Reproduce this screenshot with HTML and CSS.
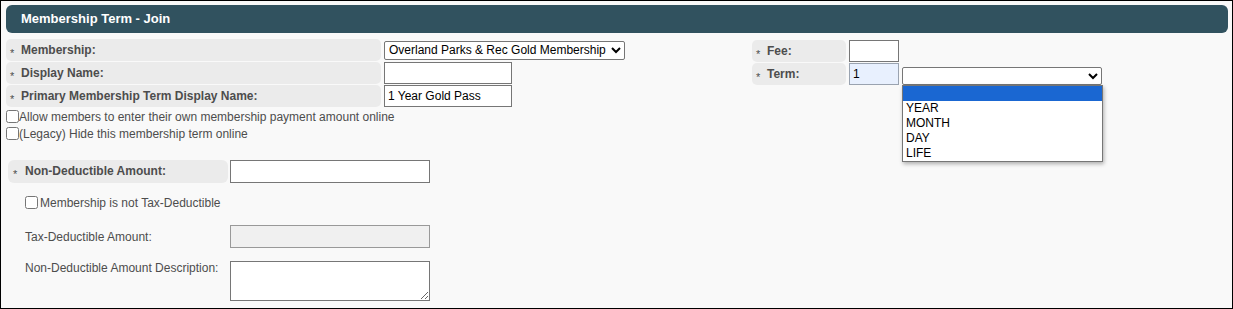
FILE: index.html
```html
<!DOCTYPE html>
<html lang="en">
<head>
    <meta charset="UTF-8">
    <meta name="viewport" content="width=device-width, initial-scale=1.0">
    <title>Membership Term - Join</title>
    <link rel="stylesheet" href="styles.css">
</head>
<body>
<div class="frame">
    <div class="panel-head">Membership Term - Join</div>

    <div class="top">
        <div class="col-left">
            <div class="field-row">
                <div class="cell"><span class="req">*</span>Membership:</div>
                <select class="sel-membership">
                    <option>Overland Parks &amp; Rec Gold Membership</option>
                </select>
            </div>
            <div class="field-row">
                <div class="cell"><span class="req">*</span>Display Name:</div>
                <input type="text" class="txt">
            </div>
            <div class="field-row">
                <div class="cell"><span class="req">*</span>Primary Membership Term Display Name:</div>
                <input type="text" class="txt" value="1 Year Gold Pass">
            </div>
        </div>
        <div class="col-right">
            <div class="field-row small">
                <div class="cell"><span class="req">*</span>Fee:</div>
                <input type="text" class="txt short">
            </div>
            <div class="field-row small">
                <div class="cell"><span class="req">*</span>Term:</div>
                <input type="text" class="txt short filled" value="1">
                <span class="drop-wrap">
                    <select class="sel-term">
                        <option></option>
                    </select>
                    <div class="drop-list">
                        <div class="opt active">&nbsp;</div>
                        <div class="opt">YEAR</div>
                        <div class="opt">MONTH</div>
                        <div class="opt">DAY</div>
                        <div class="opt">LIFE</div>
                    </div>
                </span>
            </div>
        </div>
    </div>

    <div class="checks">
        <label class="check-line"><input type="checkbox">Allow members to enter their own membership payment amount online</label>
        <label class="check-line"><input type="checkbox">(Legacy) Hide this membership term online</label>
    </div>

    <div class="nd">
        <div class="nd-row">
            <div class="nd-label cell"><span class="req">*</span>Non-Deductible Amount:</div>
            <input type="text" class="txt wide">
        </div>
        <label class="nd-check"><input type="checkbox">Membership is not Tax-Deductible</label>
        <div class="nd-row mid tax">
            <div class="nd-label">Tax-Deductible Amount:</div>
            <input type="text" class="txt wide" disabled>
        </div>
        <div class="nd-row desc">
            <div class="nd-label">Non-Deductible Amount Description:</div>
            <textarea class="area"></textarea>
        </div>
    </div>
</div>
</body>
</html>
```

FILE: styles.css
```css
body {
    margin: 0;
    font-family: "Liberation Sans", Arial, sans-serif;
    font-size: 12px;
    color: #4d4d4d;
}
.frame {
    height: 309px;
    box-sizing: border-box;
    border: 1px solid #000;
    background: #f9f9f9;
    padding: 4px 4px 0 5px;
}
.panel-head {
    height: 28px;
    line-height: 28px;
    background: #31525f;
    border-radius: 6px;
    color: #fff;
    font-weight: bold;
    font-size: 13px;
    padding-left: 15px;
}
.top {
    display: flex;
    margin-top: 6px;
}
.col-left {
    flex: 0 0 746px;
}
.col-right {
    padding-top: 1px;
}
.field-row {
    display: flex;
    align-items: center;
    gap: 3px;
    height: 22px;
    margin-bottom: 1px;
}
.cell {
    box-sizing: border-box;
    width: 375px;
    height: 22px;
    line-height: 22px;
    background: #ebebeb;
    border-radius: 5px;
    padding-left: 4px;
    font-weight: bold;
    white-space: nowrap;
}
.field-row.small .cell {
    width: 94px;
}
.req {
    display: inline-block;
    width: 11px;
    font-size: 11px;
    font-weight: normal;
    vertical-align: -3px;
}
.txt {
    box-sizing: border-box;
    width: 128px;
    height: 22px;
    margin: 0;
    padding: 0 3px;
    border: 1px solid #767676;
    background: #fff;
    font-family: "Liberation Sans", Arial, sans-serif;
    font-size: 12px;
    color: #000;
}
.txt.short {
    width: 50px;
}
.txt.filled {
    background: #e8f0fe;
    border-color: #9aa3b0;
}
.txt.wide {
    width: 200px;
    height: 23px;
}
.txt:disabled {
    background: #f0f0f0;
    border-color: #999;
}
select {
    box-sizing: border-box;
    margin: 0;
    font-family: "Liberation Sans", Arial, sans-serif;
    font-size: 12px;
    color: #000;
    background: #fff;
    border: 1px solid #767676;
    border-radius: 2px;
}
.sel-membership {
    width: 241px;
    height: 19px;
}
.drop-wrap {
    position: relative;
    display: inline-block;
    height: 18px;
    margin-top: 3px;
}
.sel-term {
    width: 200px;
    height: 18px;
    display: block;
}
.drop-list {
    position: absolute;
    top: 18px;
    left: 0;
    width: 201px;
    box-sizing: border-box;
    background: #fff;
    border: 1px solid #767676;
    box-shadow: 1px 2px 4px rgba(0, 0, 0, 0.3);
    color: #000;
    z-index: 2;
}
.opt {
    height: 15px;
    line-height: 14px;
    padding-left: 3px;
}
.opt.active {
    background: #1a67d2;
}
.checks {
    margin-top: 0;
}
.check-line {
    display: flex;
    align-items: center;
    height: 17px;
}
.check-line input,
.nd-check input {
    width: 13px;
    height: 13px;
    margin: 0;
}
.nd {
    margin: 18px 0 0 2px;
}
.nd-row {
    display: flex;
    gap: 2px;
    align-items: flex-start;
}
.nd-row.mid {
    align-items: center;
}
.nd-label {
    box-sizing: border-box;
    width: 220px;
    padding-left: 17px;
    line-height: 14px;
}
.nd-label.cell {
    height: 23px;
    line-height: 23px;
    padding-left: 5px;
    border-radius: 6px;
}
.nd-label .req {
    width: 12px;
}
.nd-check {
    display: flex;
    align-items: center;
    gap: 2px;
    height: 13px;
    margin-top: 13px;
    padding-left: 17px;
}
.tax {
    margin-top: 16px;
}
.desc {
    margin-top: 13px;
}
.area {
    box-sizing: border-box;
    width: 200px;
    height: 40px;
    margin: 0;
    border: 1px solid #767676;
    background: #fff;
    font-family: "Liberation Sans", Arial, sans-serif;
    font-size: 12px;
}
```
